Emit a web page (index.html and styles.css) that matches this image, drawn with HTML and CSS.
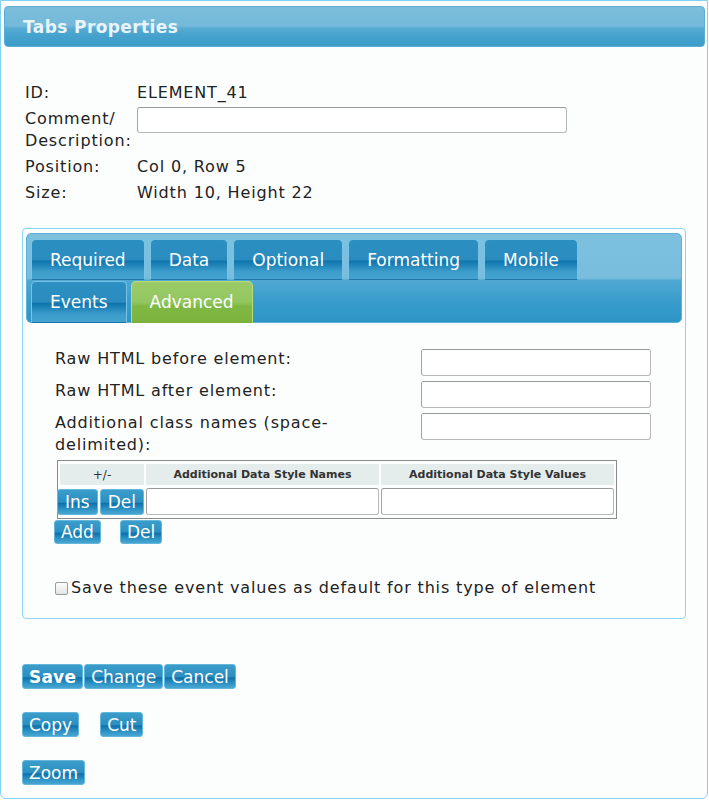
FILE: index.html
```html
<!DOCTYPE html>
<html>
<head>
<meta charset="utf-8">
<link rel="stylesheet" href="styles.css">
</head>
<body>
<div class="dialog">
  <div class="titlebar"><span class="title">Tabs Properties</span></div>

  <div class="props">
    <div class="plabel">ID:</div><div class="pval">ELEMENT_41</div>
    <div class="plabel">Comment/<br>Description:</div><div class="pval"><input class="txt comment" type="text"></div>
    <div class="plabel">Position:</div><div class="pval">Col 0, Row 5</div>
    <div class="plabel">Size:</div><div class="pval">Width 10, Height 22</div>
  </div>

  <div class="tabbox">
    <div class="tabhead">
      <div class="tabrow">
        <div class="tab">Required</div>
        <div class="tab">Data</div>
        <div class="tab">Optional</div>
        <div class="tab">Formatting</div>
        <div class="tab">Mobile</div>
      </div>
      <div class="tabrow row2">
        <div class="tab">Events</div>
        <div class="tab active">Advanced</div>
      </div>
    </div>
    <div class="tabcontent">
      <div class="frow"><div class="flabel">Raw HTML before element:</div><input class="txt finput" type="text"></div>
      <div class="frow"><div class="flabel">Raw HTML after element:</div><input class="txt finput" type="text"></div>
      <div class="frow"><div class="flabel">Additional class names (space-<br>delimited):</div><input class="txt finput" type="text"></div>

      <table class="dtable">
        <tr>
          <th class="c1">+/-</th>
          <th class="c2">Additional Data Style Names</th>
          <th class="c3">Additional Data Style Values</th>
        </tr>
        <tr>
          <td class="c1 btncell"><span class="btn sm">Ins</span><span class="btn sm">Del</span></td>
          <td><input class="txt cellinput" type="text"></td>
          <td><input class="txt cellinput" type="text"></td>
        </tr>
      </table>
      <div class="addrow"><span class="btn sm">Add</span><span class="btn sm">Del</span></div>

      <label class="chk"><span class="box"></span>Save these event values as default for this type of element</label>
    </div>
  </div>

  <div class="actions">
    <div class="brow tight"><span class="btn bold">Save</span><span class="btn">Change</span><span class="btn">Cancel</span></div>
    <div class="brow wide"><span class="btn">Copy</span><span class="btn">Cut</span></div>
    <div class="brow"><span class="btn">Zoom</span></div>
  </div>
</div>
</body>
</html>
```

FILE: styles.css
```css
* { box-sizing: border-box; }
html, body { margin: 0; padding: 0; background: #ffffff; }
body {
  font-family: "DejaVu Sans", sans-serif;
  font-size: 16px;
  letter-spacing: 0.85px;
  color: #222;
}
.dialog {
  width: 708px;
  height: 799px;
  border: 1px solid #86d0f0;
  border-radius: 0 0 6px 6px;
  background: #fcfefe;
  padding: 5px 2px 0 3px;
}
.titlebar {
  height: 41px;
  border-radius: 4px;
  border: 1px solid #5aaed6;
  background: linear-gradient(to bottom, #7cbedc 0%, #74b9d9 48%, #55aad2 56%, #45a2cd 75%, #3c9dca 100%);
  display: flex;
  align-items: center;
  padding-left: 18px;
}
.title {
  color: #e8f4fa;
  font-weight: bold;
  font-size: 17px;
  letter-spacing: 0.4px;
}
.props {
  display: grid;
  grid-template-columns: 112px 1fr;
  row-gap: 4px;
  line-height: 22px;
  margin: 35px 0 0 21px;
}
.txt {
  border: 1px solid #b8b8b8;
  border-top-color: #999;
  border-left-color: #a4a4a4;
  border-radius: 3px;
  background: #fff;
  margin: 0;
  padding: 0;
  font: inherit;
}
.comment { width: 430px; height: 26px; display: block; margin-top: -1px; }

.tabbox {
  margin: 24px 0 0 18px;
  width: 664px;
  height: 391px;
  border: 1px solid #8cd4f2;
  border-radius: 4px;
  padding: 4px 3px;
}
.tabhead {
  height: 90px;
  border-radius: 5px;
  border: 1px solid #5fb0d8;
  background: linear-gradient(to bottom, #7dc1df 0%, #78bddd 50%, #4ea8d2 53%, #3a9dcb 75%, #2b95c6 100%);
  padding: 5px 0 0 4px;
}
.tabrow {
  display: flex;
  column-gap: 5px;
}
.tabrow.row2 { margin-top: 1px; column-gap: 4px; }
.tab {
  height: 41px;
  padding: 0 18px;
  display: flex;
  align-items: center;
  color: #fff;
  font-size: 17px;
  letter-spacing: 0;
  border: 1px solid #79c2e3;
  border-bottom: 1px solid #1d75a8;
  border-radius: 5px 5px 0 0;
  background: linear-gradient(to bottom, #2c8fc2 0%, #2a8cbf 50%, #0f75ad 54%, #1b80b5 62%, #3b9ccb 80%, #44a3cf 100%);
}
.row2 .tab { height: 42px; }
.tab.active {
  border-color: #b9dc74;
  border-bottom-color: #79b040;
  background: linear-gradient(to bottom, #9acb68 0%, #93c660 50%, #80b845 60%, #7bb33d 100%);
}
.tabcontent { padding: 26px 0 0 29px; }
.frow {
  display: flex;
  align-items: flex-start;
  justify-content: space-between;
  width: 596px;
  margin-bottom: 5px;
}
.flabel { line-height: 22px; margin-top: -1px; }
.finput { width: 230px; height: 27px; }

.dtable {
  margin: -1px 0 0 2px;
  width: 560px;
  border: 1px solid #8a8a8a;
  border-spacing: 2px 3px;
  border-collapse: separate;
}
.dtable th {
  background: #e4ecec;
  font-size: 11px;
  font-weight: bold;
  letter-spacing: 0;
  height: 21px;
  padding: 0;
  color: #333;
}
.dtable th.c1 { font-weight: normal; width: 84px; font-size: 12px; }
.dtable th.c3 { width: 233px; }
.dtable td { padding: 0; }
.btncell { white-space: nowrap; }
.btncell .btn:first-child { margin-left: -3px; }
.cellinput { width: 100%; height: 27px; display: block; }

.btn {
  display: inline-flex;
  align-items: center;
  justify-content: center;
  height: 25px;
  padding: 0 6px;
  color: #fff;
  font-size: 17px;
  letter-spacing: 0;
  border: 1px solid #63b6dc;
  border-radius: 3px;
  background: linear-gradient(to bottom, #3a9dca 0%, #2c8fc0 50%, #0d72aa 56%, #1c80b6 66%, #3499c8 85%, #48a6d1 100%);
  vertical-align: top;
}
.btn.sm { height: 26px; padding: 0 7px; }
.btncell .btn + .btn { margin-left: 2px; }
.btn.bold { font-weight: bold; letter-spacing: 0.2px; }

.addrow { display: flex; gap: 19px; margin: 1px 0 0 -1px; }
.addrow .btn { height: 24px; padding: 0 6px; }

.chk {
  display: flex;
  align-items: center;
  margin: 33px 0 0 0;
  line-height: 22px;
}
.box {
  width: 13px;
  height: 13px;
  border: 1px solid #9a9a9a;
  border-radius: 2px;
  background: linear-gradient(#fdfdfd, #e4e4e4);
  margin-right: 3px;
}

.actions { margin: 45px 0 0 18px; display: flex; flex-direction: column; gap: 23px; }
.brow { display: flex; }
.brow.tight { gap: 1px; }
.brow.wide { gap: 21px; }
```
